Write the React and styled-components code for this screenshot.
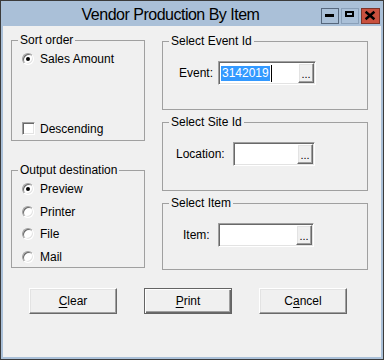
import React from 'react';
import styled, { createGlobalStyle } from 'styled-components';

const GlobalStyle = createGlobalStyle`
  html, body { margin: 0; padding: 0; background: #fff; }
  body { font-family: "Liberation Sans", Arial, sans-serif; font-size: 12px; color: #000; }
  *, *::before, *::after { box-sizing: border-box; }
`;

const Window = styled.div`
  width: 384px;
  height: 360px;
  border: 1px solid #3b3b3b;
  background: #aac0d8;
  display: flex;
  flex-direction: column;
`;

const TitleBar = styled.div`
  height: 25px;
  flex: none;
  display: flex;
  align-items: flex-start;
  padding: 5px 3px 0 0;
`;

const Title = styled.div`
  flex: 1;
  text-align: center;
  padding-left: 19px;
  font-size: 16px;
  line-height: 18px;
  letter-spacing: -0.5px;
  color: #000;
  white-space: nowrap;
`;

const CaptionButtons = styled.div`
  display: flex;
  gap: 2px;
  margin-top: 2px;
`;

const CaptionButton = styled.div`
  width: ${p => p.$w}px;
  height: 16px;
  border: 1px solid ${p => p.$border};
  background: ${p => p.$bg};
  display: flex;
  svg { display: block; }
`;

const Client = styled.div`
  flex: 1;
  margin: 0 2px 2px;
  background: #f0f0f0;
  padding: 7px 0 0 8px;
  display: flex;
  flex-direction: column;
`;

const Main = styled.div`
  display: flex;
  gap: 17px;
`;

const LeftCol = styled.div`
  width: 134px;
  display: flex;
  flex-direction: column;
  gap: 22px;
`;

const RightCol = styled.div`
  width: 206px;
  margin-top: 1px;
  display: flex;
  flex-direction: column;
  gap: 5px;
`;

const Group = styled.fieldset`
  margin: 0;
  padding: 0;
  min-width: 0;
  height: ${p => p.$h}px;
  border: 1px solid #a0a0a0;
`;

const Legend = styled.legend`
  margin-left: 6px;
  padding: 0 2px;
  line-height: 15px;
  font-size: 12px;
`;

const OptionList = styled.div`
  display: flex;
  flex-direction: column;
  gap: 6.5px;
  margin-top: 3px;
`;

const OptionRow = styled.label`
  display: flex;
  align-items: center;
  gap: ${p => p.$gap || 6}px;
  height: ${p => p.$h || 16}px;
  padding-left: 10px;
  margin-top: ${p => p.$mt || 0}px;
`;

const RadioMark = styled.span`
  width: 12px;
  height: 12px;
  flex: none;
  border-radius: 50%;
  background: #fff;
  border: 1px solid;
  border-color: #a0a0a0 #fff #fff #a0a0a0;
  box-shadow: inset 1px 1px 0 #696969, inset -1px -1px 0 #e3e3e3;
  display: flex;
  align-items: center;
  justify-content: center;
  &::after {
    content: '';
    width: 4px;
    height: 4px;
    border-radius: 50%;
    background: ${p => (p.$checked ? '#000' : 'transparent')};
  }
`;

const CheckMark = styled.span`
  width: 13px;
  height: 13px;
  flex: none;
  background: #fff;
  border: 1px solid;
  border-color: #a0a0a0 #fff #fff #a0a0a0;
  box-shadow: inset 1px 1px 0 #696969, inset -1px -1px 0 #e3e3e3;
`;

const FieldRow = styled.div`
  display: flex;
  align-items: center;
  margin-top: 12px;
  padding-left: ${p => p.$pl}px;
`;

const FieldLabel = styled.span`
  flex: none;
  width: ${p => p.$w}px;
`;

const InputBox = styled.div`
  width: ${p => p.$w}px;
  height: 24px;
  flex: none;
  display: flex;
  padding: 1px;
  background: #fff;
  border: 1px solid;
  border-color: #a0a0a0 #fff #fff #a0a0a0;
  box-shadow: inset 1px 1px 0 #696969, inset -1px -1px 0 #e3e3e3;
`;

const InputText = styled.div`
  flex: 1;
  display: flex;
  align-items: center;
  padding-left: 1px;
`;

const Selection = styled.span`
  background: #3399ff;
  color: #fff;
  line-height: 15px;
  padding: 0 1px;
`;

const Caret = styled.span`
  width: 1px;
  height: 17px;
  background: #000;
  margin-left: 1px;
`;

const BrowseButton = styled.div`
  width: 16px;
  flex: none;
  display: flex;
  align-items: center;
  justify-content: center;
  background: #f0f0f0;
  border: 1px solid;
  border-color: #fff #696969 #696969 #fff;
  box-shadow: inset -1px -1px 0 #a0a0a0, inset 1px 1px 0 #e3e3e3;
  font-size: 11px;
  line-height: 12px;
  padding-top: 2px;
`;

const ButtonRow = styled.div`
  display: flex;
  gap: 27px;
  margin-top: 18px;
  margin-left: 18px;
`;

const PushButton = styled.button`
  width: 88px;
  height: 26px;
  padding: 0;
  font-family: inherit;
  font-size: 12px;
  color: #000;
  background: #f0f0f0;
  border: 1px solid;
  border-color: ${p => (p.$default ? '#646464' : '#fff #696969 #696969 #fff')};
  box-shadow: ${p =>
    p.$default
      ? 'inset 1px 1px 0 #fff, inset -1px -1px 0 #696969, inset -2px -2px 0 #a0a0a0'
      : 'inset -1px -1px 0 #a0a0a0, inset 1px 1px 0 #e3e3e3'};
  u { text-decoration: underline; text-underline-offset: 2px; }
`;

const Radio = ({ checked, children }) => (
  <OptionRow>
    <RadioMark $checked={checked} />
    <span>{children}</span>
  </OptionRow>
);

export default function App() {
  return (
    <>
      <GlobalStyle />
      <Window>
        <TitleBar>
          <Title>Vendor Production By Item</Title>
          <CaptionButtons>
            <CaptionButton $w={18} $border="#56677d" $bg="#aac0d8">
              <svg width="16" height="14" viewBox="0 0 16 14">
                <rect x="3" y="5" width="9" height="3" fill="#000" />
              </svg>
            </CaptionButton>
            <CaptionButton $w={18} $border="#8aa0b9" $bg="#aac0d8">
              <svg width="16" height="14" viewBox="0 0 16 14">
                <path d="M3 2h9v6H3z M5 4v2h5V4z" fill="#000" fillRule="evenodd" />
              </svg>
            </CaptionButton>
            <CaptionButton $w={19} $border="#7d3328" $bg="#c9503e">
              <svg width="17" height="14" viewBox="0 0 17 14">
                <path d="M4.5 3.5 L11.5 9.5 M11.5 3.5 L4.5 9.5" stroke="#000" strokeWidth="2.4" strokeLinecap="square" />
              </svg>
            </CaptionButton>
          </CaptionButtons>
        </TitleBar>
        <Client>
          <Main>
            <LeftCol>
              <Group $h={108}>
                <Legend>Sort order</Legend>
                <OptionList>
                  <Radio checked>Sales Amount</Radio>
                </OptionList>
                <OptionRow $h={13} $mt={55} $gap={5}>
                  <CheckMark />
                  <span>Descending</span>
                </OptionRow>
              </Group>
              <Group $h={105}>
                <Legend>Output destination</Legend>
                <OptionList>
                  <Radio checked>Preview</Radio>
                  <Radio>Printer</Radio>
                  <Radio>File</Radio>
                  <Radio>Mail</Radio>
                </OptionList>
              </Group>
            </LeftCol>
            <RightCol>
              <Group $h={76}>
                <Legend>Select Event Id</Legend>
                <FieldRow $pl={16}>
                  <FieldLabel $w={39}>Event:</FieldLabel>
                  <InputBox $w={98}>
                    <InputText>
                      <Selection>3142019</Selection>
                      <Caret />
                    </InputText>
                    <BrowseButton>...</BrowseButton>
                  </InputBox>
                </FieldRow>
              </Group>
              <Group $h={76}>
                <Legend>Select Site Id</Legend>
                <FieldRow $pl={13}>
                  <FieldLabel $w={57}>Location:</FieldLabel>
                  <InputBox $w={82}>
                    <InputText />
                    <BrowseButton>...</BrowseButton>
                  </InputBox>
                </FieldRow>
              </Group>
              <Group $h={74}>
                <Legend>Select Item</Legend>
                <FieldRow $pl={20}>
                  <FieldLabel $w={35}>Item:</FieldLabel>
                  <InputBox $w={96}>
                    <InputText />
                    <BrowseButton>...</BrowseButton>
                  </InputBox>
                </FieldRow>
              </Group>
            </RightCol>
          </Main>
          <ButtonRow>
            <PushButton><u>C</u>lear</PushButton>
            <PushButton $default><u>P</u>rint</PushButton>
            <PushButton>C<u>a</u>ncel</PushButton>
          </ButtonRow>
        </Client>
      </Window>
    </>
  );
}
